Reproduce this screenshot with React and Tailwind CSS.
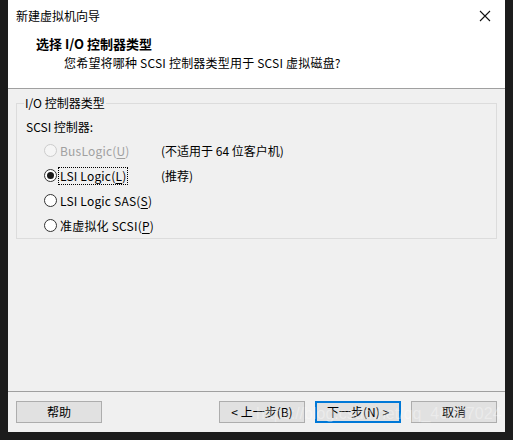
import React from 'react';

const font = { fontFamily: '"Noto Sans CJK SC", "Noto Sans", sans-serif' };

const Radio = ({ checked, disabled }) => (
  <span
    className={`w-[13px] h-[13px] rounded-full border flex items-center justify-center shrink-0 ${
      disabled ? 'border-[#cccccc] bg-[#f5f5f5]' : 'border-[#333333] bg-white'
    }`}
  >
    {checked && <span className="w-[7px] h-[7px] rounded-full bg-[#1a1a1a]" />}
  </span>
);

const Option = ({ label, hot, rest = ')', note, checked, disabled, focused }) => (
  <div className="flex items-center h-[25px]">
    <div className="flex items-center w-[144px] pl-[27px] gap-[2px]">
      <Radio checked={checked} disabled={disabled} />
      <span
        className={`px-[1px] leading-[16px] tracking-[0.2px] ${disabled ? 'text-[#a0a0a0]' : 'text-black'} ${
          focused ? 'outline outline-1 outline-dotted outline-black' : ''
        }`}
      >
        {label}
        <span className="underline underline-offset-2">{hot}</span>
        {rest}
      </span>
    </div>
    {note && <span className="text-black">{note}</span>}
  </div>
);

const Button = ({ children, primary }) => (
  <button
    className={`w-[86px] h-[22px] bg-[#e1e1e1] text-[12px] text-black flex items-center justify-center ${
      primary ? 'border-2 border-[#0078d7]' : 'border border-[#adadad]'
    }`}
  >
    {children}
  </button>
);

export default function App() {
  return (
    <div className="w-[513px] h-[440px] bg-[#1c1c1c] pl-[8px] relative overflow-hidden" style={font}>
      <div className="w-[497px] h-[432px] bg-[#f0f0f0] flex flex-col text-[12px]">
        {/* title bar + header */}
        <div className="bg-white border-b border-[#a0a0a0] h-[89px] flex flex-col">
          <div className="h-[31px] flex items-center justify-between pl-[8px] pr-[12px]">
            <span className="text-[12px] text-black">新建虚拟机向导</span>
            <svg width="12" height="12" viewBox="0 0 12 12" className="mr-[2px]">
              <path d="M1 1 L11 11 M11 1 L1 11" stroke="#111" strokeWidth="1.1" fill="none" />
            </svg>
          </div>
          <div className="pl-[28px] pt-[4px] text-[13px] font-bold leading-[17px] text-black">
            选择 I/O 控制器类型
          </div>
          <div className="pl-[56px] pt-[2px] leading-[17px] text-black tracking-[0.2px]">
            您希望将哪种 SCSI 控制器类型用于 SCSI 虚拟磁盘?
          </div>
        </div>

        {/* body */}
        <div className="flex-1 px-[8px] pt-[7px]">
          <fieldset className="border border-[#dcdcdc] h-[143px] pl-[9px] m-0 pb-0">
            <legend className="px-[1px] -ml-[2px] text-black leading-[14px]">I/O 控制器类型</legend>
            <div className="pt-[9px] leading-[16px] text-black">SCSI 控制器:</div>
            <div className="-ml-[9px] pt-[3px]">
              <Option label="BusLogic(" hot="U" note="(不适用于 64 位客户机)" disabled />
              <Option label="LSI Logic(" hot="L" note="(推荐)" checked focused />
              <Option label="LSI Logic SAS(" hot="S" />
              <Option label="准虚拟化 SCSI(" hot="P" />
            </div>
          </fieldset>
        </div>

        {/* footer */}
        <div className="border-t border-[#a0a0a0] h-[41px] flex items-start pt-[9px] px-[8px]">
          <Button>帮助</Button>
          <div className="flex-1" />
          <div className="flex gap-[10px] mr-[10px]">
            <Button>&lt; 上一步(B)</Button>
            <Button primary>下一步(N) &gt;</Button>
          </div>
          <Button>取消</Button>
        </div>
      </div>
      <div
        className="absolute left-[256px] top-[404px] text-[16px] leading-[20px] text-white/35 pointer-events-none whitespace-nowrap"
        style={{ fontFamily: '"Liberation Sans", sans-serif' }}
      >
        https://blog.csdn.net/qq_46207024
      </div>
    </div>
  );
}
